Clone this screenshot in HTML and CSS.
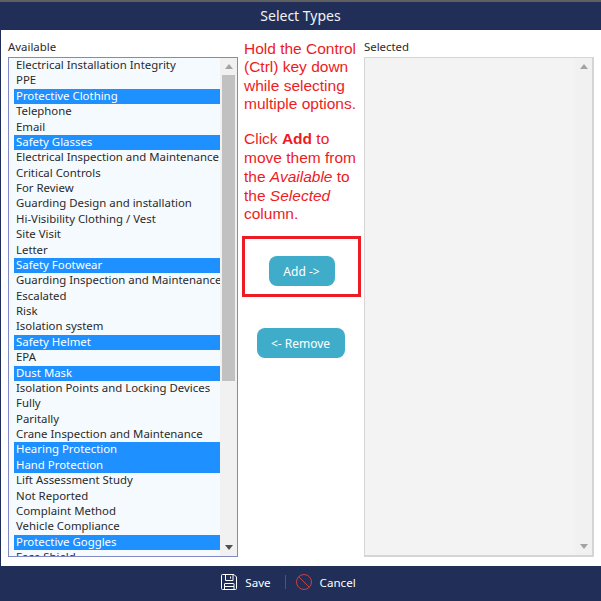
FILE: index.html
```html
<!DOCTYPE html>
<html>
<head>
    <title>Select Types</title>
    <link rel="stylesheet" href="styles.css">
</head>
<body>
    <div class="dialog">
        <h3 class="dialog-title">Select Types</h3>
        <div class="dialog-body">
            <div class="column column-available">
                <div class="column-label">Available</div>
                <div class="listbox">
                    <ul class="options">
                        <li>Electrical Installation Integrity</li>
                        <li>PPE</li>
                        <li class="selected">Protective Clothing</li>
                        <li>Telephone</li>
                        <li>Email</li>
                        <li class="selected">Safety Glasses</li>
                        <li>Electrical Inspection and Maintenance</li>
                        <li>Critical Controls</li>
                        <li>For Review</li>
                        <li>Guarding Design and installation</li>
                        <li>Hi-Visibility Clothing / Vest</li>
                        <li>Site Visit</li>
                        <li>Letter</li>
                        <li class="selected">Safety Footwear</li>
                        <li>Guarding Inspection and Maintenance</li>
                        <li>Escalated</li>
                        <li>Risk</li>
                        <li>Isolation system</li>
                        <li class="selected">Safety Helmet</li>
                        <li>EPA</li>
                        <li class="selected">Dust Mask</li>
                        <li>Isolation Points and Locking Devices</li>
                        <li>Fully</li>
                        <li>Paritally</li>
                        <li>Crane Inspection and Maintenance</li>
                        <li class="selected">Hearing Protection</li>
                        <li class="selected">Hand Protection</li>
                        <li>Lift Assessment Study</li>
                        <li>Not Reported</li>
                        <li>Complaint Method</li>
                        <li>Vehicle Compliance</li>
                        <li class="selected">Protective Goggles</li>
                        <li>Face Shield</li>
                    </ul>
                    <div class="scrollbar">
                        <span class="arrow arrow-up"></span>
                        <div class="track"><div class="thumb"></div></div>
                        <span class="arrow arrow-down"></span>
                    </div>
                </div>
            </div>
            <div class="column column-actions">
                <p class="help help-first">Hold the Control (Ctrl) key down while selecting multiple options.</p>
                <p class="help help-second">Click <b>Add</b> to move them from the <i>Available</i> to the <i>Selected</i> column.</p>
                <div class="add-highlight">
                    <button class="btn btn-add">Add -&gt;</button>
                </div>
                <button class="btn btn-remove">&lt;- Remove</button>
            </div>
            <div class="column column-selected">
                <div class="column-label">Selected</div>
                <div class="listbox listbox-disabled">
                    <ul class="options"></ul>
                    <div class="scrollbar">
                        <span class="arrow arrow-up"></span>
                        <div class="track"></div>
                        <span class="arrow arrow-down"></span>
                    </div>
                </div>
            </div>
        </div>
        <div class="dialog-footer">
            <a class="footer-action">
                <svg class="footer-icon" viewBox="0 0 16 16" fill="none" stroke="#fff" stroke-width="1">
                    <path d="M1.5 .5H13L15.500 3V14.500Q15.500 15.500 14.500 15.500H1.500Q.5 15.500 .5 14.500V1.500Q.5 .5 1.500 .5Z"/>
                    <path d="M4.500 .5V6.500H12V.5"/>
                    <path d="M9.500 2.500V4.500"/>
                    <path d="M3.500 15.500V10Q3.500 9.500 4 9.500H12.500Q13 9.500 13 10V15.500"/>
                    <path d="M3.500 12.500H13"/>
                </svg>
                Save
            </a>
            <span class="footer-divider"></span>
            <a class="footer-action">
                <svg class="footer-icon" viewBox="0 0 16 16" fill="none" stroke="#c9403f" stroke-width="1">
                    <circle cx="8" cy="8" r="7.500"/>
                    <path d="M2.700 2.700L13.300 13.300"/>
                </svg>
                Cancel
            </a>
        </div>
    </div>
</body>
</html>
```

FILE: styles.css
```css
html, body {
    margin: 0;
    padding: 0;
}

body {
    font-family: "Noto Sans", Arial, sans-serif;
    background-color: #212f58;
}

.dialog {
    display: flex;
    flex-direction: column;
    width: 601px;
    height: 601px;
    overflow: hidden;
    border-top: 2px solid #5f5f5f;
    box-sizing: border-box;
}

.dialog-title {
    margin: 0;
    height: 28px;
    line-height: 28px;
    font-size: 14px;
    font-weight: normal;
    text-align: center;
    color: #f2f2f2;
    background-color: #212f58;
}

.dialog-body {
    display: flex;
    height: 536px;
    margin-left: 1px;
    padding: 10px 0 9px 7px;
    box-sizing: border-box;
    background-color: #ffffff;
}

.column {
    display: flex;
    flex-direction: column;
}

.column-available {
    width: 230px;
}

.column-selected {
    width: 230px;
    margin-left: 1px;
}

.column-label {
    height: 17px;
    line-height: 13px;
    font-size: 11.400px;
    color: #2a2a2a;
}

.listbox {
    display: flex;
    flex: 1;
    min-height: 0;
    overflow: hidden;
    border: 1px solid #8189c4;
    background-color: #f5faff;
}

.listbox-disabled {
    border: 1px solid #d5d5d5;
    border-width: 1px 2px 2px 1px;
    background-color: #f4f3f3;
}

.options {
    flex: 1;
    min-width: 0;
    margin: 0;
    padding: 0 0 0 5px;
    list-style-type: none;
    overflow: hidden;
}

.options li {
    height: 15.390px;
    line-height: 14.100px;
    padding-left: 2px;
    font-size: 11.400px;
    white-space: nowrap;
    overflow: hidden;
    color: #2a2a2a;
}

.options li.selected {
    color: #ffffff;
    background-color: #1e90ff;
}

.scrollbar {
    display: flex;
    flex-direction: column;
    align-items: center;
    flex-shrink: 0;
    width: 17px;
    background-color: #f1f1f1;
}

.arrow {
    flex-shrink: 0;
    width: 0;
    height: 0;
    margin: 6px 0;
    border-left: 4px solid transparent;
    border-right: 4px solid transparent;
}

.arrow-up {
    border-bottom: 5px solid #a3a3a3;
}

.arrow-down {
    border-top: 5px solid #505050;
}

.listbox-disabled .arrow-down {
    border-top-color: #a3a3a3;
}

.track {
    flex: 1;
    width: 100%;
}

.thumb {
    width: 13px;
    height: 306px;
    margin: 0 auto;
    background-color: #c1c1c1;
}

.column-actions {
    align-items: center;
    width: 125px;
    box-sizing: border-box;
}

.help {
    width: 113px;
    font-family: "Liberation Sans", Arial, sans-serif;
    font-size: 15.500px;
    color: #ed1c24;
}

.help-first {
    margin: 0 0 17px 0;
    line-height: 18.300px;
}

.help-second {
    margin: 0 0 12px 0;
    line-height: 18.800px;
}

.add-highlight {
    display: flex;
    justify-content: center;
    align-items: flex-start;
    width: 119px;
    height: 61px;
    margin-left: 2px;
    padding-top: 17px;
    box-sizing: border-box;
    border: 3px solid #ed1c24;
}

.btn {
    height: 30px;
    padding: 0;
    border: none;
    border-radius: 8px;
    font-family: "Noto Sans", Arial, sans-serif;
    font-size: 12px;
    color: #ffffff;
    background-color: #3fadc9;
}

.btn-add {
    width: 66px;
}

.btn-remove {
    width: 88px;
    margin-top: 31px;
}

.dialog-footer {
    display: flex;
    justify-content: center;
    align-items: center;
    flex: 1;
    padding: 0 24px 3px 0;
    font-size: 11.600px;
    color: #ffffff;
    background-color: #212f58;
}

.footer-action {
    display: flex;
    align-items: center;
    gap: 8px;
}

.footer-icon {
    width: 16px;
    height: 16px;
}

.footer-divider {
    width: 1px;
    height: 14px;
    margin: 0 10px 0 14px;
    background-color: #4a5678;
}
```
